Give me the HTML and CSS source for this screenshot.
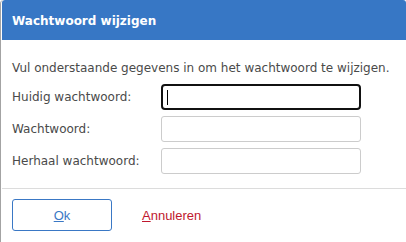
FILE: index.html
```html
<!DOCTYPE html>
<html lang="nl">
<head>
<meta charset="utf-8">
<title>Wachtwoord wijzigen</title>
<link rel="stylesheet" href="styles.css">
</head>
<body>
<div class="frame">
  <div class="dialog">
    <div class="header">Wachtwoord wijzigen</div>
    <div class="content">
      <p class="intro">Vul onderstaande gegevens in om het wachtwoord te wijzigen.</p>
      <div class="form">
        <label class="label">Huidig wachtwoord:</label>
        <div class="field focused"><span class="caret"></span></div>
        <label class="label">Wachtwoord:</label>
        <div class="field"></div>
        <label class="label">Herhaal wachtwoord:</label>
        <div class="field"></div>
      </div>
    </div>
    <div class="footer">
      <button class="btn-ok"><span class="key">O</span>k</button>
      <a class="btn-cancel"><span class="key">A</span>nnuleren</a>
    </div>
  </div>
</div>
</body>
</html>
```
FILE: styles.css
```css
html, body {
  margin: 0;
  padding: 0;
  background: #ffffff;
}
.frame {
  height: 242px;
  border-left: 1px solid #a3a3a3;
  border-top-left-radius: 4px;
  padding-left: 1px;
  box-sizing: border-box;
  overflow: hidden;
}
.dialog {
  display: flex;
  flex-direction: column;
  height: 100%;
}
.header {
  height: 40px;
  background: #3777c5;
  border-top-left-radius: 3px;
  border-top-right-radius: 3px;
  color: #ffffff;
  font-family: "DejaVu Sans", sans-serif;
  font-weight: bold;
  font-size: 12px;
  display: flex;
  align-items: center;
  padding-left: 10px;
  padding-top: 1px;
  box-sizing: border-box;
}
.content {
  padding: 20px 10px 0 10px;
  font-family: "DejaVu Sans", sans-serif;
  font-size: 12px;
  color: #4a4a4a;
}
.intro {
  margin: 0;
  line-height: 16px;
  height: 16px;
}
.form {
  margin-top: 8px;
  display: grid;
  grid-template-columns: 149px 200px;
  row-gap: 6px;
  align-items: center;
}
.label {
  line-height: 16px;
}
.field {
  height: 26px;
  box-sizing: border-box;
  border: 1px solid #cccccc;
  border-radius: 3px;
  background: #fff;
  display: flex;
  align-items: center;
}
.field.focused {
  border: 2px solid #111111;
  border-radius: 4px;
}
.caret {
  width: 1px;
  height: 15px;
  background: #000;
  margin-left: 4px;
}
.footer {
  margin-top: 14px;
  border-top: 1px solid #dcdcdc;
  padding: 10px 10px 0 10px;
  display: flex;
  align-items: center;
  font-family: "Liberation Sans", Arial, sans-serif;
  font-size: 13px;
}
.btn-ok {
  width: 100px;
  height: 32px;
  border: 1px solid #3a78c5;
  border-radius: 3px;
  background: #fff;
  color: #3a78c5;
  font-family: "Liberation Sans", Arial, sans-serif;
  font-size: 13px;
  padding: 0;
  margin: 0;
}
.btn-cancel {
  margin-left: 30px;
  color: #c0182e;
}
.key {
  text-decoration: underline;
}
```
